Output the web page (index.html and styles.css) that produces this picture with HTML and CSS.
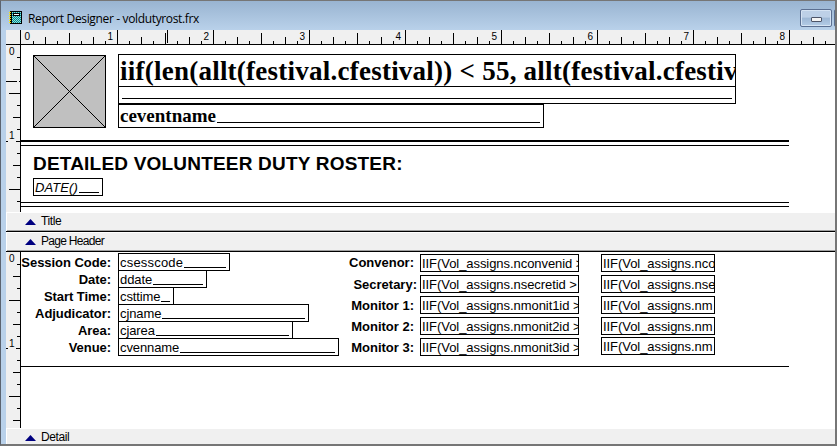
FILE: index.html
```html
<!DOCTYPE html>
<html lang="en">
<head>
<meta charset="utf-8">
<title>Report Designer - voldutyrost.frx</title>
<link rel="stylesheet" href="styles.css">
</head>
<body>
<div class="window">
  <header class="titlebar">
    <svg class="app-icon" width="13" height="13" viewBox="0 0 13 13" shape-rendering="crispEdges">
      <defs><pattern id="dither" width="2" height="2" patternUnits="userSpaceOnUse"><rect width="2" height="2" fill="#008c8c"/><rect width="1" height="1" fill="#8fdede"/><rect x="1" y="1" width="1" height="1" fill="#8fdede"/></pattern></defs>
      <rect x="1" width="12" height="13" fill="#000"/>
      <rect x="3" y="1" width="9" height="11" fill="url(#dither)"/>
      <rect x="4" y="2" width="7" height="3" fill="#000"/>
      <rect x="5" y="3" width="5" height="1" fill="#fff"/>
      <path d="M0 1h2M0 3h2M0 5h2M0 7h2M0 9h2M0 11h2" stroke="#ffe800" transform="translate(0 .5)"/>
    </svg>
    <span class="caption">Report Designer - voldutyrost.frx</span>
    <span class="controls"><i class="btn"><i class="dash"></i></i><i class="btn"></i></span>
  </header>

  <svg class="ruler-h" width="829" height="15" shape-rendering="crispEdges">
    <defs>
      <pattern id="inch" x="15" width="96" height="15" patternUnits="userSpaceOnUse">
        <path d="M0 0h1v14h-1zM12 11h1v3h-1zM24 7h1v7h-1zM36 11h1v3h-1zM48 3h1v11h-1zM60 11h1v3h-1zM72 7h1v7h-1zM84 11h1v3h-1z"/>
      </pattern>
    </defs>
    <rect x="16" width="813" height="14" fill="url(#inch)"/>
    <path d="M0 14h829v1h-829zM14 0h1v14h-1zM161 0h1v13h-1z"/>
    <g text-anchor="end">
      <text x="24" y="10">0</text><text x="107" y="10">1</text><text x="203" y="10">2</text><text x="299" y="10">3</text><text x="395" y="10">4</text><text x="491" y="10">5</text><text x="587" y="10">6</text><text x="683" y="10">7</text><text x="779" y="10">8</text>
    </g>
  </svg>

  <section class="band band-title">
    <svg class="ruler-v" width="15" height="167" shape-rendering="crispEdges">
      <path d="M14 0h1v167h-1zM11 12h3v1h-3zM7 24h7v1h-7zM0 36h11v1h-11zM13 36h1v1h-1zM3 48h11v1h-11zM11 60h3v1h-3zM7 72h7v1h-7zM11 84h3v1h-3zM0 96h2v1h-2zM10 96h4v1h-4zM11 108h3v1h-3zM7 120h7v1h-7zM11 132h3v1h-3zM3 144h11v1h-11zM11 156h3v1h-3z"/>
      <text x="3" y="10">0</text><text x="3" y="94">1</text>
    </svg>
    <div class="canvas">
      <svg class="picture" width="73" height="73"><rect x=".5" y=".5" width="72" height="72" fill="#c0c0c0" stroke="#000"/><path d="M1 1l71 71M72 1l-71 71" stroke="#000" shape-rendering="crispEdges"/></svg>
      <div class="heading-fields">
        <div class="field festival">iif(len(allt(festival.cfestival)) &lt; 55, allt(festival.cfestiv</div>
        <div class="field overflow"><i class="fill"></i></div>
        <div class="field event">ceventname<i class="fill"></i></div>
      </div>
      <div class="double-rule heavy"></div>
      <h1>DETAILED VOLUNTEER DUTY ROSTER:</h1>
      <div class="field date">DATE()<i class="fill"></i></div>
      <div class="double-rule light"></div>
    </div>
  </section>
  <div class="bar"><i class="arrow"></i>Title</div>
  <div class="bar page-header"><i class="arrow"></i>Page Header</div>

  <section class="band band-detail">
    <svg class="ruler-v" width="15" height="176" shape-rendering="crispEdges">
      <path d="M14 0h1v176h-1zM11 12h3v1h-3zM7 24h7v1h-7zM11 36h3v1h-3zM3 48h11v1h-11zM11 60h3v1h-3zM7 72h7v1h-7zM11 84h3v1h-3zM0 96h2v1h-2zM10 96h4v1h-4zM11 108h3v1h-3zM7 120h7v1h-7zM11 132h3v1h-3zM3 144h11v1h-11zM11 156h3v1h-3zM7 168h7v1h-7z"/>
      <text x="3" y="10">0</text><text x="3" y="95">1</text>
    </svg>
    <div class="canvas">
      <div class="session">
        <b>Session Code:</b><div class="field f-code">csesscode<i class="fill"></i></div>
        <b>Date:</b><div class="field f-date">ddate<i class="fill"></i></div>
        <b>Start Time:</b><div class="field f-time">csttime<i class="fill"></i></div>
        <b>Adjudicator:</b><div class="field f-adj">cjname<i class="fill"></i></div>
        <b>Area:</b><div class="field f-area">cjarea<i class="fill"></i></div>
        <b>Venue:</b><div class="field f-venue">cvenname<i class="fill"></i></div>
      </div>
      <div class="staff">
        <b class="convenor">Convenor:</b><div class="field">IIF(Vol_assigns.nconvenid &gt;</div><div class="field">IIF(Vol_assigns.nco</div>
        <b class="secretary">Secretary:</b><div class="field">IIF(Vol_assigns.nsecretid &gt;</div><div class="field">IIF(Vol_assigns.nse</div>
        <b>Monitor 1:</b><div class="field">IIF(Vol_assigns.nmonit1id &gt;</div><div class="field">IIF(Vol_assigns.nm</div>
        <b>Monitor 2:</b><div class="field">IIF(Vol_assigns.nmonit2id &gt;</div><div class="field">IIF(Vol_assigns.nm</div>
        <b>Monitor 3:</b><div class="field">IIF(Vol_assigns.nmonit3id &gt;</div><div class="field raised">IIF(Vol_assigns.nm</div>
      </div>
      <div class="end-rule"></div>
    </div>
  </section>
  <div class="bar last"><i class="arrow"></i>Detail</div>
</div>
</body>
</html>
```
FILE: styles.css
```css
* { box-sizing: border-box; }
body { margin: 0; background: #fff; }
.window {
  width: 837px; height: 446px; overflow: hidden;
  display: flex; flex-direction: column;
  border: solid #767676; border-width: 1px 2px 2px 1px;
  border-left-color: #5c6470;
  padding-left: 5px; background: #b9d1ea;
  font-family: "Liberation Sans", Arial, sans-serif; color: #000;
}
.titlebar {
  flex: none; height: 29px; margin-left: -5px; padding: 8px 0 0 8px;
  display: flex; align-items: flex-start; overflow: hidden;
  background: linear-gradient(#99b4d1, #b9d1ea);
}
.app-icon { flex: none; margin-top: 2px; }
.caption {
  margin-left: 6px; flex: 1; white-space: nowrap;
  font: 12px/20px "Open Sans", sans-serif; letter-spacing: -.35px;
}
.controls { display: flex; gap: 2px; width: 35px; overflow: hidden; }
.btn {
  flex: none; width: 32px; height: 18px;
  display: flex; align-items: center; justify-content: center;
  border: 1px solid #5b6f91; border-radius: 2px; box-shadow: inset 0 0 0 1px #d5e3f3;
  background: linear-gradient(#bdd0e7 45%, #9db7d5 50%, #b4cce6);
}
.dash { width: 11px; height: 5px; margin-top: 3px; background: #f4f4f4; border: 1px solid #4d5468; border-radius: 1px; }

.ruler-h, .ruler-v { flex: none; display: block; background: #f0f0f0; font-size: 10px; }
.band { flex: none; display: flex; background: #fff; }
.band-title { height: 167px; }
.band-detail { height: 176px; }
.canvas { flex: 1; position: relative; font-size: 13px; white-space: nowrap; }

.bar {
  flex: none; height: 20px; display: flex; align-items: flex-start;
  padding-left: 19px; font-size: 12px; line-height: 18px; letter-spacing: -.4px;
  background: #f0f0f0; border-bottom: 1px solid #000;
  box-shadow: inset 1px 1px #fff, inset 0 -1px #a0a0a0;
}
.bar.page-header { letter-spacing: -.7px; }
.bar.last { height: 16px; border: 0; box-shadow: inset 1px 1px #fff; }
.arrow { width: 11px; height: 6px; margin: 7px 5px 0 0; background: #000080; clip-path: polygon(50% 0, 100% 100%, 0 100%); }

.field {
  height: 18px; border: 1px solid #000; overflow: hidden;
  display: flex; padding: 0 3px 0 1px; line-height: 17px; white-space: pre;
}
.fill { flex: 1; height: 1px; background: #000; margin: 13px 0 0 1px; }

/* Report objects on the title band's design surface */
.picture { position: absolute; left: 12px; top: 10px; }
.heading-fields {
  position: absolute; left: 97px; top: 9px; width: 618px;
  font-family: "Liberation Serif", serif; font-weight: bold;
}
.festival { height: 33px; padding-right: 0; font-size: 27px; line-height: 33px; letter-spacing: .24px; }
.overflow { margin-top: -1px; }
.overflow .fill { margin: 11px 0 0 2px; }
.event { width: 426px; height: 24px; font-size: 19px; line-height: 22px; }
.event .fill { margin-top: 17px; }
.double-rule { position: absolute; left: 0; width: 768px; border: solid #000; }
.heavy { top: 95px; height: 6px; border-width: 2px 0 1px; }
.light { top: 157px; height: 5px; border-width: 1px 0; }
h1 { position: absolute; left: 12px; top: 108px; margin: 0; font-size: 19px; line-height: 22px; letter-spacing: .2px; }
.date { position: absolute; left: 12px; top: 133px; width: 70px; font-style: italic; letter-spacing: .1px; }

/* Report objects on the detail band's design surface */
.session {
  position: absolute; left: 0; top: 1px;
  display: grid; grid-template-columns: 90px auto; grid-auto-rows: 17px; column-gap: 7px;
}
.session b { text-align: right; line-height: 20px; letter-spacing: -.05px; }
.f-code { width: 112px; letter-spacing: .2px; }
.f-date { width: 89px; }
.f-time { width: 56px; }
.f-adj { width: 191px; }
.f-area { width: 175px; }
.f-venue { width: 221px; }
.session .field:not(.f-code) { letter-spacing: -.1px; }
.staff {
  position: absolute; left: 323px; top: 2px;
  display: grid; grid-template-columns: 70px 159px 114px; grid-auto-rows: 21px;
}
.staff b { text-align: right; line-height: 19px; }
.staff .field { padding-right: 0; letter-spacing: -.06px; }
.staff b + .field { margin-left: 6px; width: 159px; }
.staff .field + .field { margin-left: 28px; width: 114px; }
.staff .raised { margin-top: -1px; }
.staff .convenor { line-height: 18px; }
.staff .secretary { margin-right: -3px; }
.end-rule { position: absolute; left: 0; top: 114px; width: 768px; height: 1px; background: #000; }
```
